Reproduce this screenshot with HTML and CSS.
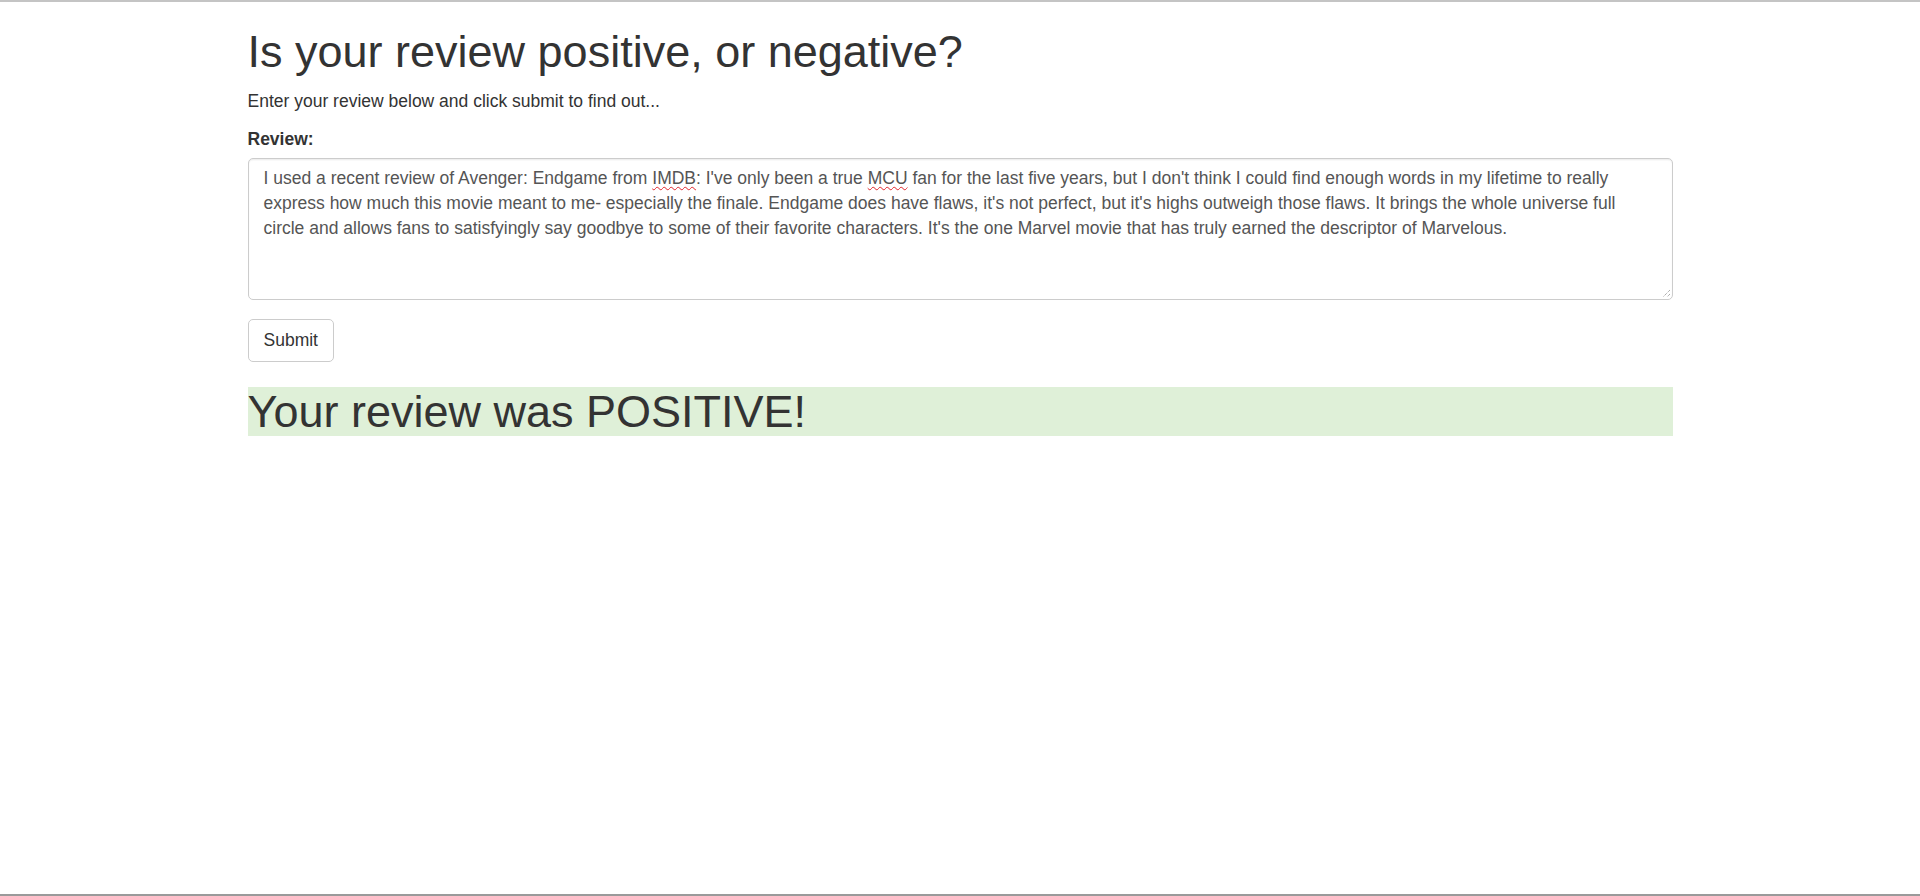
FILE: index.html
```html
<!DOCTYPE html>
<html lang="en">
<head>
<meta charset="utf-8">
<title>Review Sentiment</title>
<link rel="stylesheet" href="styles.css">
</head>
<body>
<div class="container">
  <h1 class="title">Is your review positive, or negative?</h1>
  <p class="lead-text">Enter your review below and click submit to find out...</p>
  <form class="review-form">
    <div class="form-group">
      <label class="field-label">Review:</label>
      <div class="form-control review-box" role="textbox" aria-multiline="true">I used a recent review of Avenger: Endgame from <span class="misspelt">IMDB</span>: I've only been a true <span class="misspelt">MCU</span> fan for the last five years, but I don't think I could find enough words in my lifetime to really express how much this movie meant to me- especially the finale. Endgame does have flaws, it's not perfect, but it's highs outweigh those flaws. It brings the whole universe full circle and allows fans to satisfyingly say goodbye to some of their favorite characters. It's the one Marvel movie that has truly earned the descriptor of Marvelous.<svg class="grip" width="10" height="10" viewBox="0 0 10 10"><path d="M9 2 L2 9 M9 6 L6 9" stroke="#8a8a8a" stroke-width="1" stroke-dasharray="1 1" fill="none"/></svg></div>
    </div>
    <button type="button" class="btn">Submit</button>
  </form>
  <h1 class="result">Your review was POSITIVE!</h1>
</div>
</body>
</html>
```
FILE: styles.css
```css
html, body {
  margin: 0;
  padding: 0;
}
body {
  box-sizing: border-box;
  min-height: 100vh;
  border-top: 2px solid #c4c4c4;
  border-bottom: 2px solid #9a9a9a;
  background: #fff;
  font-family: "Liberation Sans", Arial, Helvetica, sans-serif;
  font-size: 17.5px;
  line-height: 25px;
  color: #333;
}
.container {
  width: 1462.5px;
  box-sizing: border-box;
  margin: 0 auto;
  padding: 0 18.75px;
}
.title, .result {
  font-size: 45px;
  font-weight: 500;
  line-height: 1.1;
  margin: 25px 0 12.5px;
  color: #333;
}
.lead-text {
  margin: 0 0 12.5px;
}
.review-form {
  margin: 0;
}
.form-group {
  margin-bottom: 18.75px;
}
.field-label {
  display: inline-block;
  font-weight: bold;
  margin-bottom: 6.25px;
}
.form-control {
  position: relative;
  display: block;
  box-sizing: border-box;
  width: 100%;
  height: 142.5px;
  padding: 7.5px 15px;
  border: 1.25px solid #ccc;
  border-radius: 5px;
  box-shadow: inset 0 1.25px 1.25px rgba(0, 0, 0, 0.075);
  color: #555;
  font-size: 17.5px;
  line-height: 25px;
  background: #fff;
}
.misspelt {
  text-decoration: underline wavy #e0242a;
  text-decoration-thickness: 1px;
  text-underline-offset: 2px;
}
.grip {
  position: absolute;
  right: 1px;
  bottom: 1px;
}
.btn {
  display: inline-block;
  box-sizing: border-box;
  height: 42.5px;
  padding: 7.5px 15px;
  font-family: inherit;
  font-size: 17.5px;
  line-height: 25px;
  color: #333;
  background: #fff;
  border: 1.25px solid #ccc;
  border-radius: 5px;
  cursor: pointer;
}
.result {
  background: #dff0d8;
}
```
